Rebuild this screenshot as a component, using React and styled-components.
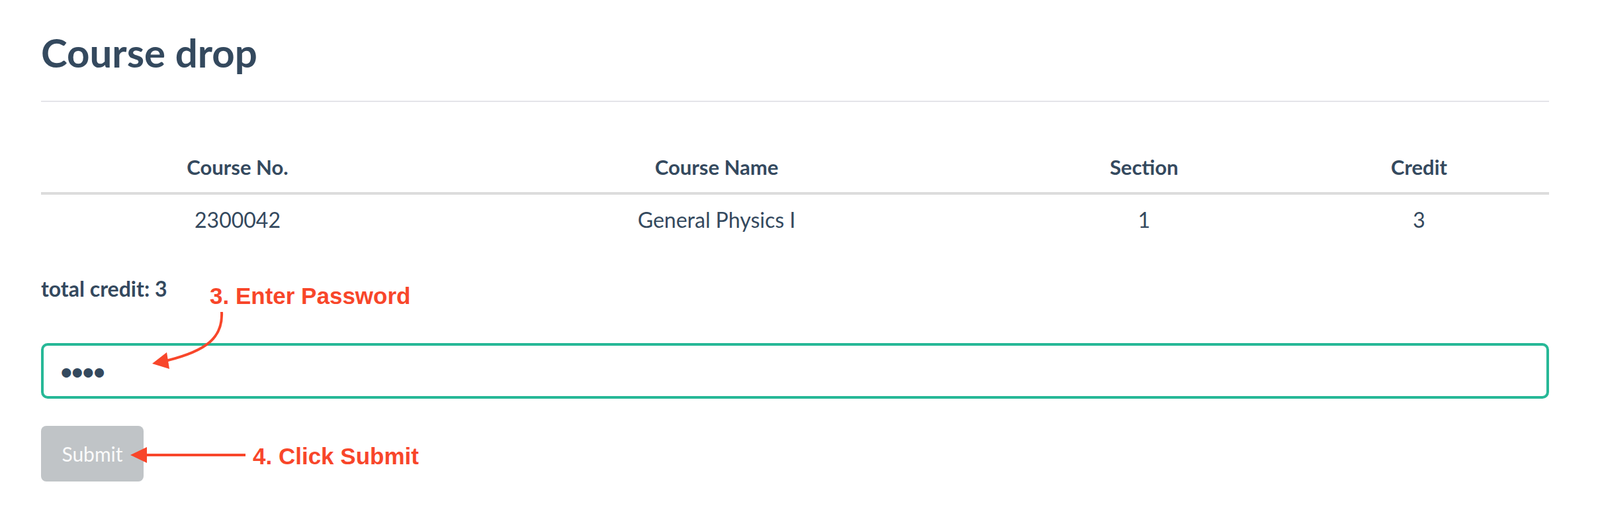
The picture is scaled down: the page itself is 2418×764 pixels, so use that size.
import React from "react";
import styled, { createGlobalStyle } from "styled-components";

const GlobalStyle = createGlobalStyle`
  body {
    margin: 0;
    background: #ffffff;
    font-family: Lato, "Open Sans", sans-serif;
    color: #34495e;
  }
`;

const Page = styled.div`
  position: relative;
  width: 2279px;
  padding: 48px 77px 37px 62px;
`;

const Title = styled.h1`
  margin: 0;
  font-size: 60px;
  line-height: 62px;
  font-weight: 700;
  padding-bottom: 42px;
  border-bottom: 2px solid #e4e4e9;
`;

const Table = styled.div`
  display: grid;
  grid-template-columns: 594px 854px 438px 393px;
  margin-top: 82px;
`;

const HeadCell = styled.div`
  text-align: center;
  font-size: 31px;
  line-height: 32px;
  font-weight: 700;
  padding-bottom: 22px;
  border-bottom: 4px solid #dcdcdc;
`;

const Cell = styled.div`
  text-align: center;
  font-size: 32px;
  line-height: 32px;
  padding-top: 22px;
`;

const Total = styled.p`
  margin: 72px 0 0;
  font-size: 32px;
  line-height: 32px;
  font-weight: 700;
`;

const PasswordInput = styled.input`
  display: block;
  box-sizing: border-box;
  width: 100%;
  height: 84px;
  margin-top: 66px;
  padding: 0 25px;
  border: 4px solid #27b897;
  border-radius: 10px;
  font-family: Lato, sans-serif;
  font-size: 32px;
  font-weight: 700;
  color: #34495e;
  outline: none;
  letter-spacing: -2px;
`;

const SubmitButton = styled.button`
  display: block;
  box-sizing: border-box;
  width: 155px;
  height: 84px;
  margin-top: 41px;
  padding: 0;
  border: none;
  border-radius: 8px;
  background: #c0c4c7;
  color: #fafafa;
  font-family: Lato, sans-serif;
  font-size: 30px;
  font-weight: 400;
  cursor: default;
`;

const Note = styled.span`
  position: absolute;
  top: ${(p) => p.top}px;
  left: ${(p) => p.left}px;
  font-family: "Liberation Sans", Arial, sans-serif;
  font-weight: 700;
  font-size: 35px;
  line-height: 35px;
  color: #f8462a;
  white-space: nowrap;
`;

const Overlay = styled.svg`
  position: absolute;
  top: 0;
  left: 0;
  width: 100%;
  height: 100%;
  pointer-events: none;
`;

const columns = ["Course No.", "Course Name", "Section", "Credit"];
const courses = [{ no: "2300042", name: "General Physics I", section: "1", credit: "3" }];

export default function App() {
  return (
    <Page>
      <GlobalStyle />
      <Title>Course drop</Title>
      <Table>
        {columns.map((c) => (
          <HeadCell key={c}>{c}</HeadCell>
        ))}
        {courses.map((c) => (
          <React.Fragment key={c.no}>
            <Cell>{c.no}</Cell>
            <Cell>{c.name}</Cell>
            <Cell>{c.section}</Cell>
            <Cell>{c.credit}</Cell>
          </React.Fragment>
        ))}
      </Table>
      <Total>total credit: 3</Total>
      <PasswordInput type="password" defaultValue="1234" readOnly />
      <SubmitButton disabled>Submit</SubmitButton>

      <Note top={429} left={317}>3. Enter Password</Note>
      <Note top={671} left={382}>4. Click Submit</Note>

      <Overlay viewBox="0 0 2418 764" preserveAspectRatio="none">
        {/* curved arrow to the password box */}
        <path d="M335 471 C 337 510, 312 530, 250 545" fill="none" stroke="#f8462a" strokeWidth="4" />
        <polygon points="230,549 252,532 256,557" fill="#f8462a" />
        {/* straight arrow to the submit button */}
        <line x1="220" y1="687" x2="371" y2="687" stroke="#f8462a" strokeWidth="4" />
        <polygon points="197,687 222,675 222,699" fill="#f8462a" />
      </Overlay>
    </Page>
  );
}
